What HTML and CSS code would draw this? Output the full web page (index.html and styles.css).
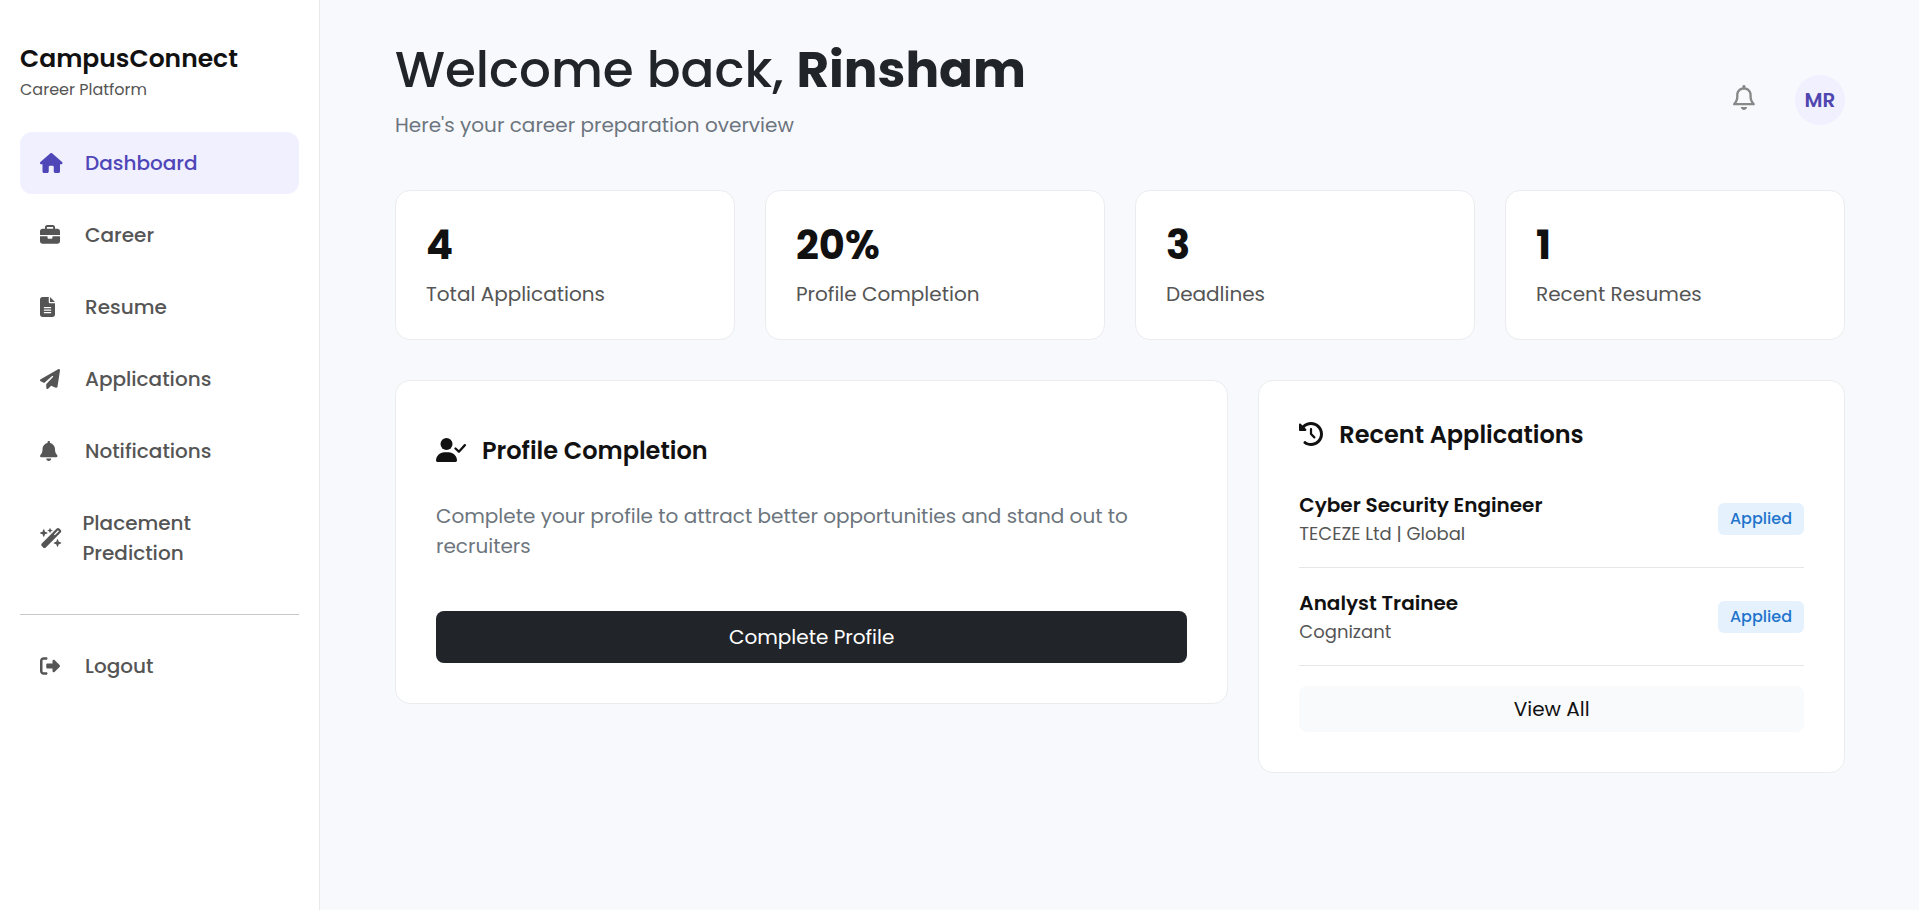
FILE: index.html
```html
<!DOCTYPE html>
<html lang="en">
<head>
<meta charset="utf-8">
<meta name="viewport" content="width=device-width, initial-scale=1">
<title>CampusConnect - Dashboard</title>
<link rel="stylesheet" href="styles.css">
</head>
<body>
<div class="app">
  <aside class="sidebar">
    <div class="brand">
      <div class="brand-name">CampusConnect</div>
      <div class="brand-sub">Career Platform</div>
    </div>
    <nav class="nav" aria-label="Main">
      <a class="nav-link active" href="#"><span class="nav-icon"><svg viewBox="0 0 576 512" aria-hidden="true"><path d="M575.8 255.5c0 18-15 32.100-32 32.100h-32l.7 160.200c0 2.700-.2 5.400-.5 8.100V472c0 22.100-17.900 40-40 40H456c-1.100 0-2.200 0-3.300-.1c-1.400 .1-2.800 .1-4.200 .1H392c-22.100 0-40-17.900-40-40V360c0-17.700-14.300-32-32-32H256c-17.700 0-32 14.300-32 32v112c0 22.100-17.900 40-40 40H128.100c-1.500 0-3-.1-4.500-.2c-1.200 .1-2.400 .2-3.600 .2H104c-22.100 0-40-17.900-40-40V287.600H32c-18 0-32-14-32-32.100c0-9 3-17 10-24L266.400 8c7-7 15-8 22-8s15 2 21 7L564.800 231.500c8 7 12 15 11 24z"/></svg></span><span>Dashboard</span></a>
      <a class="nav-link" href="#"><span class="nav-icon"><svg viewBox="0 0 512 512" aria-hidden="true"><path d="M184 48H328c4.400 0 8 3.600 8 8V96H176V56c0-4.400 3.600-8 8-8zm-56 8V96H64C28.700 96 0 124.700 0 160v96H192 320 512V160c0-35.300-28.700-64-64-64H384V56c0-30.900-25.100-56-56-56H184c-30.900 0-56 25.100-56 56zM512 288H320v32c0 17.700-14.300 32-32 32H224c-17.700 0-32-14.300-32-32V288H0V416c0 35.300 28.700 64 64 64H448c35.300 0 64-28.700 64-64V288z"/></svg></span><span>Career</span></a>
      <a class="nav-link" href="#"><span class="nav-icon"><svg viewBox="0 0 384 512" aria-hidden="true"><path d="M64 0C28.700 0 0 28.700 0 64V448c0 35.300 28.700 64 64 64H320c35.300 0 64-28.700 64-64V160H256c-17.700 0-32-14.300-32-32V0H64zM256 0V128H384L256 0zM112 256H272c8.800 0 16 7.200 16 16s-7.200 16-16 16H112c-8.800 0-16-7.200-16-16s7.200-16 16-16zm0 64H272c8.800 0 16 7.200 16 16s-7.200 16-16 16H112c-8.800 0-16-7.200-16-16s7.200-16 16-16zm0 64H272c8.800 0 16 7.200 16 16s-7.200 16-16 16H112c-8.800 0-16-7.200-16-16s7.200-16 16-16z"/></svg></span><span>Resume</span></a>
      <a class="nav-link" href="#"><span class="nav-icon"><svg viewBox="0 0 512 512" aria-hidden="true"><path d="M498.100 5.600c10.100 7 15.400 19.100 13.500 31.200l-64 416c-1.500 9.700-7.400 18.200-16 23s-18.900 5.400-28 1.600L284 427.700l-68.500 74.100c-8.900 9.700-22.900 12.900-35.200 8.100S160 493.200 160 480V396.400c0-4 1.500-7.800 4.200-10.700L331.800 202.800c5.800-6.300 5.600-16-.4-22s-15.700-6.400-22-.7L106 360.800 17.700 316.600C7.100 311.300 .3 300.700 0 288.900s5.900-22.800 16.100-28.700l448-256c10.700-6.100 23.900-5.500 34 1.400z"/></svg></span><span>Applications</span></a>
      <a class="nav-link" href="#"><span class="nav-icon"><svg viewBox="0 0 448 512" aria-hidden="true"><path d="M224 0c-17.700 0-32 14.300-32 32V51.200C119 66 64 130.600 64 208v18.800c0 47-17.300 92.400-48.500 127.600l-7.400 8.300c-8.400 9.400-10.400 22.900-5.300 34.400S19.400 416 32 416H416c12.600 0 24-7.400 29.200-18.900s3.100-25-5.300-34.400l-7.400-8.300C401.300 319.200 384 273.900 384 226.800V208c0-77.400-55-142-128-156.800V32c0-17.700-14.300-32-32-32zm45.300 493.300c12-12 18.700-28.300 18.700-45.300H224 160c0 17 6.700 33.300 18.700 45.300s28.300 18.700 45.300 18.700s33.300-6.700 45.300-18.700z"/></svg></span><span>Notifications</span></a>
      <a class="nav-link" href="#"><span class="nav-icon"><svg viewBox="0 0 576 512" aria-hidden="true"><path fill-rule="evenodd" d="M234.700 42.700L197 56.800c-3 1.100-5 4-5 7.200s2 6.100 5 7.200l37.700 14.100L248.800 123c1.100 3 4 5 7.200 5s6.100-2 7.200-5l14.100-37.700L315 71.200c3-1.100 5-4 5-7.200s-2-6.100-5-7.200L277.300 42.700 263.200 5c-1.100-3-4-5-7.200-5s-6.100 2-7.200 5L234.700 42.700zM46.100 395.400c-18.700 18.700-18.700 49.100 0 67.900l34.600 34.600c18.700 18.700 49.100 18.700 67.900 0L529.900 116.500c18.700-18.700 18.700-49.100 0-67.900L495.300 14.100c-18.700-18.700-49.100-18.700-67.900 0L46.100 395.400zM484.600 82.600l-105 105-23.300-23.300 105-105 23.300 23.300zM7.500 117.200C3 118.900 0 123.200 0 128s3 9.100 7.500 10.800L64 160l21.200 56.500c1.700 4.500 6 7.500 10.800 7.500s9.100-3 10.800-7.500L128 160l56.500-21.200c4.500-1.700 7.500-6 7.500-10.800s-3-9.100-7.500-10.800L128 96 106.800 39.500C105.100 35 100.800 32 96 32s-9.100 3-10.800 7.500L64 96 7.500 117.200zm352 256c-4.500 1.700-7.500 6-7.500 10.800s3 9.100 7.500 10.800L416 416l21.200 56.500c1.700 4.500 6 7.500 10.800 7.500s9.100-3 10.800-7.500L480 416l56.500-21.200c4.500-1.700 7.500-6 7.500-10.800s-3-9.100-7.500-10.800L480 352l-21.200-56.500c-1.700-4.500-6-7.500-10.800-7.500s-9.100 3-10.800 7.500L416 352l-56.500 21.200z"/></svg></span><span>Placement Prediction</span></a>
    </nav>
    <hr class="divider">
    <a class="nav-link" href="#"><span class="nav-icon"><svg viewBox="0 0 512 512" aria-hidden="true"><path d="M377.900 105.900L500.700 228.700c7.200 7.200 11.300 17.100 11.300 27.300s-4.100 20.100-11.300 27.300L377.900 406.100c-6.400 6.400-15 9.900-24 9.900c-18.700 0-33.900-15.200-33.900-33.900V320H192c-17.700 0-32-14.300-32-32V224c0-17.700 14.300-32 32-32H320V129.900c0-18.700 15.200-33.900 33.900-33.900c9 0 17.600 3.600 24 9.900zM160 96H96c-17.700 0-32 14.300-32 32V384c0 17.700 14.300 32 32 32h64c17.700 0 32 14.300 32 32s-14.300 32-32 32H96c-53 0-96-43-96-96V128C0 75 43 32 96 32h64c17.700 0 32 14.300 32 32s-14.300 32-32 32z"/></svg></span><span>Logout</span></a>
  </aside>

  <main class="main">
    <header class="header">
      <div class="welcome">
        <h1>Welcome back, <strong>Rinsham</strong></h1>
        <p>Here's your career preparation overview</p>
      </div>
      <div class="header-actions">
        <button class="bell" type="button" aria-label="Notifications"><svg viewBox="0 0 448 512" aria-hidden="true"><path d="M224 0c-17.700 0-32 14.300-32 32V49.900C119.500 61.400 64 124.200 64 200v33.400c0 45.400-15.500 89.500-43.800 124.900L5.300 377c-5.800 7.200-6.900 17.100-2.900 25.400S14.800 416 24 416H424c9.200 0 17.600-5.300 21.600-13.600s2.900-18.200-2.900-25.400l-14.900-18.600C399.500 322.900 384 278.800 384 233.400V200c0-75.800-55.500-138.600-128-150.100V32c0-17.700-14.300-32-32-32zm0 96h8c57.400 0 104 46.600 104 104v33.400c0 47.900 13.900 94.600 39.700 134.600H72.300C98.100 328 112 281.300 112 233.400V200c0-57.400 46.600-104 104-104h8zm64 352H224 160c0 17 6.700 33.300 18.700 45.300s28.300 18.700 45.300 18.700s33.300-6.700 45.300-18.700s18.700-28.300 18.700-45.300z"/></svg></button>
        <div class="avatar">MR</div>
      </div>
    </header>

    <section class="grid">
      <div class="card stat"><div class="stat-value">4</div><div class="stat-label">Total Applications</div></div>
      <div class="card stat"><div class="stat-value">20%</div><div class="stat-label">Profile Completion</div></div>
      <div class="card stat"><div class="stat-value">3</div><div class="stat-label">Deadlines</div></div>
      <div class="card stat"><div class="stat-value">1</div><div class="stat-label">Recent Resumes</div></div>
    </section>

    <section class="grid">
      <div class="card panel profile">
        <h2 class="panel-title"><svg class="icon-user" viewBox="0 0 640 512" aria-hidden="true"><circle cx="224" cy="128" r="128"/><path d="M30 512c-17 0-30-13-30-30c0-98 80-178 178-178h92c98 0 178 80 178 178c0 17-13 30-30 30z"/><path d="M416 224l72 68 128-140" fill="none" stroke="currentColor" stroke-width="48" stroke-linecap="round" stroke-linejoin="round"/></svg>Profile Completion</h2>
        <p class="panel-text">Complete your profile to attract better opportunities and stand out to recruiters</p>
        <button class="btn btn-dark" type="button">Complete Profile</button>
      </div>
      <div class="card panel recent">
        <h2 class="panel-title"><svg class="icon-history" viewBox="0 0 512 512" aria-hidden="true"><path d="M75 75L41 41C25.900 25.900 0 36.600 0 57.900V168c0 13.300 10.700 24 24 24H134.100c21.400 0 32.100-25.900 17-41l-30.800-30.800C155 85.500 203 64 256 64c106 0 192 86 192 192s-86 192-192 192c-40.800 0-78.600-12.700-109.700-34.400c-14.500-10.100-34.400-6.600-44.600 7.900s-6.600 34.400 7.900 44.600C151.200 495 201.700 512 256 512c141.400 0 256-114.600 256-256S397.400 0 256 0C185.300 0 121.300 28.700 75 75zm181 53c-13.300 0-24 10.700-24 24V256c0 6.400 2.500 12.500 7 17l72 72c9.400 9.400 24.600 9.400 33.900 0s9.400-24.600 0-33.900l-65-65V152c0-13.300-10.700-24-24-24z"/></svg>Recent Applications</h2>
        <ul class="app-list">
          <li class="app-row"><div><div class="app-role">Cyber Security Engineer</div><div class="app-company">TECEZE Ltd | Global</div></div><span class="badge">Applied</span></li>
          <li class="app-row"><div><div class="app-role">Analyst Trainee</div><div class="app-company">Cognizant</div></div><span class="badge">Applied</span></li>
        </ul>
        <button class="btn btn-light" type="button">View All</button>
      </div>
    </section>
  </main>
</div>
</body>
</html>
```
FILE: styles.css
```css
* { box-sizing: border-box; }

body {
  margin: 0;
  background: #f8f9fd;
  color: #212529;
  font-family: Poppins, Inter, "Open Sans", sans-serif;
  font-size: 20px;
  line-height: 30px;
}

h1, h2, p, ul { margin: 0; padding: 0; }

button { font: inherit; cursor: pointer; }

svg { display: block; fill: currentColor; }

.app {
  display: flex;
  min-height: 100vh;
}

/* Sidebar */
.sidebar {
  flex: 0 0 320px;
  padding: 40px 20px;
  background: #fff;
  border-right: 1px solid #e8e9ec;
}

.brand { margin-bottom: 30px; }

.brand-name {
  color: #111;
  font-size: 25px;
  font-weight: 600;
  line-height: 38px;
}

.brand-sub {
  color: #555;
  font-size: 16px;
  line-height: 24px;
}

.nav {
  display: flex;
  flex-direction: column;
  gap: 10px;
}

.nav-link {
  display: flex;
  align-items: center;
  gap: 15px;
  padding: 16px 20px;
  border-radius: 12px;
  color: #555;
  font-weight: 500;
  text-decoration: none;
}

.nav-link.active {
  background: #f0f0fe;
  color: #4f46b8;
}

.nav-icon { flex: 0 1 30px; }
.nav-icon svg { height: 20px; }

.divider {
  margin: 30px 0 20px;
  border: 0;
  border-top: 1px solid #c8c8c8;
}

/* Main column */
.main {
  flex: 1;
  min-width: 0;
  padding: 40px 74px 40px 75px;
}

.header {
  display: flex;
  justify-content: space-between;
  align-items: center;
  margin-bottom: 30px;
}

.welcome h1 {
  margin-bottom: 10px;
  font-size: 50px;
  font-weight: 500;
  line-height: 60px;
}

.welcome strong { font-weight: 700; }

.welcome p {
  margin-bottom: 20px;
  color: #6c757d;
}

.header-actions {
  display: flex;
  align-items: center;
  gap: 40px;
}

.bell {
  padding: 0 0 5px;
  border: 0;
  background: none;
  color: #888;
}

.bell svg { height: 25px; }

.avatar {
  width: 50px;
  border-radius: 50%;
  background: #f0f0fe;
  color: #4f46b0;
  font-weight: 600;
  line-height: 50px;
  text-align: center;
}

.grid {
  display: grid;
  grid-template-columns: repeat(12, 1fr);
  align-items: start;
  gap: 30px;
  margin-bottom: 40px;
}

.card {
  background: #fff;
  border: 1px solid #ebecef;
  border-radius: 15px;
}

.stat {
  grid-column: span 3;
  padding: 30px;
}

.stat-value {
  margin-bottom: 10px;
  color: #111;
  font-size: 40px;
  font-weight: 700;
  line-height: 48px;
}

.stat-label { color: #555; }

.panel { padding: 40px; }
.profile { grid-column: span 7; }
.recent { grid-column: span 5; }

.panel-title {
  display: flex;
  align-items: center;
  gap: 16px;
  color: #111;
  font-size: 24px;
  font-weight: 600;
  line-height: 28px;
}

.panel-title svg {
  height: 24px;
  margin-bottom: 2px;
}

.profile .panel-title { padding: 16px 0 36px; }
.recent .panel-title { padding-bottom: 21px; }

.panel-text {
  margin-bottom: 50px;
  color: #6c757d;
}

.btn {
  display: block;
  width: 100%;
  border: 0;
  border-radius: 8px;
}

.btn-dark {
  padding: 11px 20px;
  background: #212529;
  color: #fff;
}

.btn-light {
  padding: 8px 20px;
  background: #f9fafb;
  color: #111;
}

.app-list {
  margin-bottom: 20px;
  list-style: none;
}

.app-row {
  display: flex;
  justify-content: space-between;
  align-items: center;
  padding: 20px 0;
  border-bottom: 1px solid #e6e6e6;
}

.app-role {
  color: #111;
  font-weight: 600;
}

.app-company {
  color: #555;
  font-size: 18px;
  line-height: 27px;
}

.badge {
  padding: 4px 12px;
  border-radius: 6px;
  background: #e5f2fe;
  color: #1f74cc;
  font-size: 16px;
  font-weight: 500;
  line-height: 24px;
}
```
